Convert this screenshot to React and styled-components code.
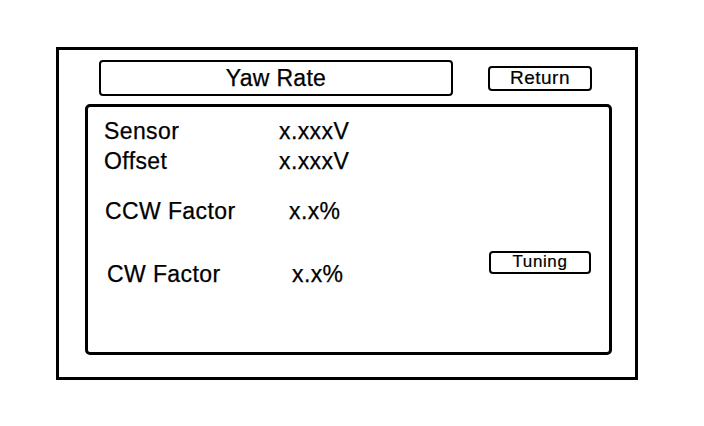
import React from "react";
import styled, { createGlobalStyle } from "styled-components";

const Global = createGlobalStyle`
  html, body { margin: 0; padding: 0; background: #fff; }
  body { font-family: "Liberation Sans", Arial, sans-serif; color: #000; }
`;

const Page = styled.div`
  width: 704px;
  height: 426px;
  padding: 47px 0 0 56px;
  box-sizing: border-box;
`;

const Frame = styled.div`
  width: 582px;
  height: 333px;
  box-sizing: border-box;
  border: 3px solid #000;
  padding: 10px 23px 22px 26px;
  display: flex;
  flex-direction: column;
  gap: 8px;
`;

const Header = styled.div`
  display: flex;
  align-items: center;
  padding-left: 14px;
  gap: 35px;
`;

const TitleBox = styled.div`
  width: 354px;
  height: 36px;
  box-sizing: border-box;
  border: 2px solid #000;
  border-radius: 4px;
  display: flex;
  align-items: center;
  justify-content: center;
  font-size: 23px;
  letter-spacing: 0.3px;
  -webkit-text-stroke: 0.25px #000;
`;

const Button = styled.div`
  width: ${(p) => p.$w}px;
  height: ${(p) => p.$h}px;
  box-sizing: border-box;
  border: 2px solid #000;
  border-radius: 4px;
  display: flex;
  align-items: center;
  justify-content: center;
  font-size: ${(p) => p.$fs}px;
  letter-spacing: 0.5px;
  -webkit-text-stroke: 0.2px #000;
`;

const Content = styled.div`
  flex: 1;
  box-sizing: border-box;
  border: 3px solid #000;
  border-radius: 5px;
  padding: 9px 18px 0 0;
  display: flex;
  flex-direction: column;
`;

const Row = styled.div`
  display: flex;
  align-items: center;
  height: 30px;
  margin-top: ${(p) => p.$gap || 0}px;
  padding-left: ${(p) => p.$indent}px;
  font-size: 23px;
  letter-spacing: 0.4px;
  -webkit-text-stroke: 0.25px #000;
`;

const Label = styled.div`
  width: ${(p) => p.$w}px;
  flex: none;
`;

const Value = styled.div`
  flex: 1;
`;

const TuningButton = styled(Button)`
  margin-bottom: 24px;
  letter-spacing: 0.6px;
`;

export default function App() {
  return (
    <>
      <Global />
      <Page>
        <Frame>
          <Header>
            <TitleBox>Yaw Rate</TitleBox>
            <Button $w={104} $h={25} $fs={19}>Return</Button>
          </Header>
          <Content>
            <Row $indent={16}>
              <Label $w={175}>Sensor</Label>
              <Value>x.xxxV</Value>
            </Row>
            <Row $indent={16}>
              <Label $w={175}>Offset</Label>
              <Value>x.xxxV</Value>
            </Row>
            <Row $indent={17} $gap={20}>
              <Label $w={184}>CCW Factor</Label>
              <Value>x.x%</Value>
            </Row>
            <Row $indent={19} $gap={33}>
              <Label $w={185}>CW Factor</Label>
              <Value>x.x%</Value>
              <TuningButton $w={102} $h={23} $fs={17}>Tuning</TuningButton>
            </Row>
          </Content>
        </Frame>
      </Page>
    </>
  );
}
